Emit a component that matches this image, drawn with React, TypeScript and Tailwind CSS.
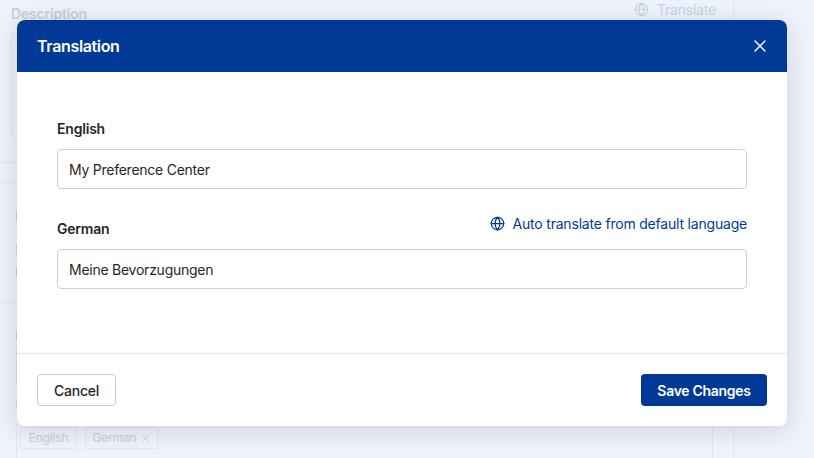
import { Globe, X } from 'lucide-react'

const FONT = "font-['Inter',sans-serif]"

function Field({ label, value, action }: { label: string; value: string; action?: boolean }) {
  return (
    <div>
      <div className="flex h-[20px] items-center justify-between">
        <span className="-mt-[2px] text-[14px] font-semibold tracking-[-0.2px] text-[#262626]">{label}</span>
        {action && (
          <button type="button" className="-mt-[11px] flex items-center gap-[8px] text-[14px] tracking-[-0.2px] text-[#003a96]">
            <Globe className="size-[15px]" strokeWidth={2} />
            Auto translate from default language
          </button>
        )}
      </div>
      <input
        readOnly
        value={value}
        className="mt-[10px] block h-[40px] w-full rounded-[4px] border border-[#d0d0d0] bg-white px-[11px] text-[14px] tracking-[-0.25px] text-[#262626] outline-none"
      />
    </div>
  )
}

// ends of the labels and inputs of the page, nearly all hidden by the modal
function HiddenEdges() {
  return (
    <div className="absolute left-[16px] top-[210px] w-[1px]">
      <div className="h-[12px] bg-[#ccd1db]" />
      <div className="mt-[23px] h-[10px] bg-[#ccd1db]" />
      <div className="mt-[12px] h-[10px] bg-[#ccd1db]" />
      <div className="mt-[53px] h-[10px] bg-[#ccd1db]" />
      <div className="mt-[6px] h-[39px] bg-[#dde1ea]" />
      <div className="mt-[16px] h-[7px] bg-[#ccd1db]" />
    </div>
  )
}

function PageBehind() {
  return (
    <div className="h-[458px] overflow-hidden">
      <div className="h-[458px] w-[734px] border-r border-[#e3e7ef]">
        <div className="flex h-[28px] items-center justify-between pl-[11px] pr-[17px]">
          <span className="-mt-[2px] text-[14px] font-semibold tracking-[-0.2px] text-[#c9ced8]">Description</span>
          <span className="-mt-[10px] flex items-center gap-[8px] text-[14px] tracking-[-0.2px] text-[#c5d3e8]">
            <Globe className="size-[15px]" strokeWidth={1.8} />
            Translate
          </span>
        </div>
        <div className="mx-[11px] mt-[6px] h-[103px] rounded-[4px] border border-[#e1e5ed]" />
        <div className="mt-[25px] h-[21px] border-y border-[#e3e7ef]" />
        <div className="mt-[119px] border-t border-[#e3e7ef]" />
        <div className="ml-[16px] mr-[20px] mt-[120px] flex h-[40px] items-start gap-[8px] rounded-[4px] border border-[#e1e5ed] px-[3px] py-[3px] text-[12px] tracking-[-0.15px] text-[#c9ced8]">
          <span className="flex h-[22px] w-[57px] items-center justify-center rounded-[2px] border border-[#e3e7ef]">English</span>
          <span className="flex h-[22px] w-[73px] items-center justify-center gap-[3px] rounded-[2px] border border-[#e3e7ef]">
            German <X className="size-[11px]" />
          </span>
        </div>
      </div>
    </div>
  )
}

export default function App() {
  return (
    <div className={`relative h-[458px] w-[814px] overflow-hidden bg-[#eff3fb] ${FONT}`}>
      <PageBehind />
      <HiddenEdges />
      <div className="absolute left-[17px] top-[20px] flex h-[406px] w-[770px] flex-col overflow-hidden rounded-[8px] bg-white shadow-[0_4px_24px_rgba(40,50,80,0.18)]">
        <header className="flex h-[52px] items-center justify-between bg-[#003a96] pl-[20px] pr-[17px] text-white">
          <h2 className="text-[16px] font-semibold tracking-[-0.35px]">Translation</h2>
          <X className="size-[20px]" strokeWidth={1.6} />
        </header>
        <div className="flex flex-1 flex-col gap-[30px] px-[40px] pt-[47px]">
          <Field label="English" value="My Preference Center" />
          <Field label="German" value="Meine Bevorzugungen" action />
        </div>
        <footer className="flex h-[73px] items-center justify-between border-t border-[#e5e5e5] px-[20px]">
          <button type="button" className="h-[32px] w-[79px] rounded-[4px] border border-[#c8c8c8] bg-white text-[14px] font-medium tracking-[-0.25px] text-[#262626]">
            Cancel
          </button>
          <button type="button" className="h-[32px] w-[126px] rounded-[4px] bg-[#003a96] text-[14px] font-semibold tracking-[-0.3px] text-white">
            Save Changes
          </button>
        </footer>
      </div>
    </div>
  )
}
